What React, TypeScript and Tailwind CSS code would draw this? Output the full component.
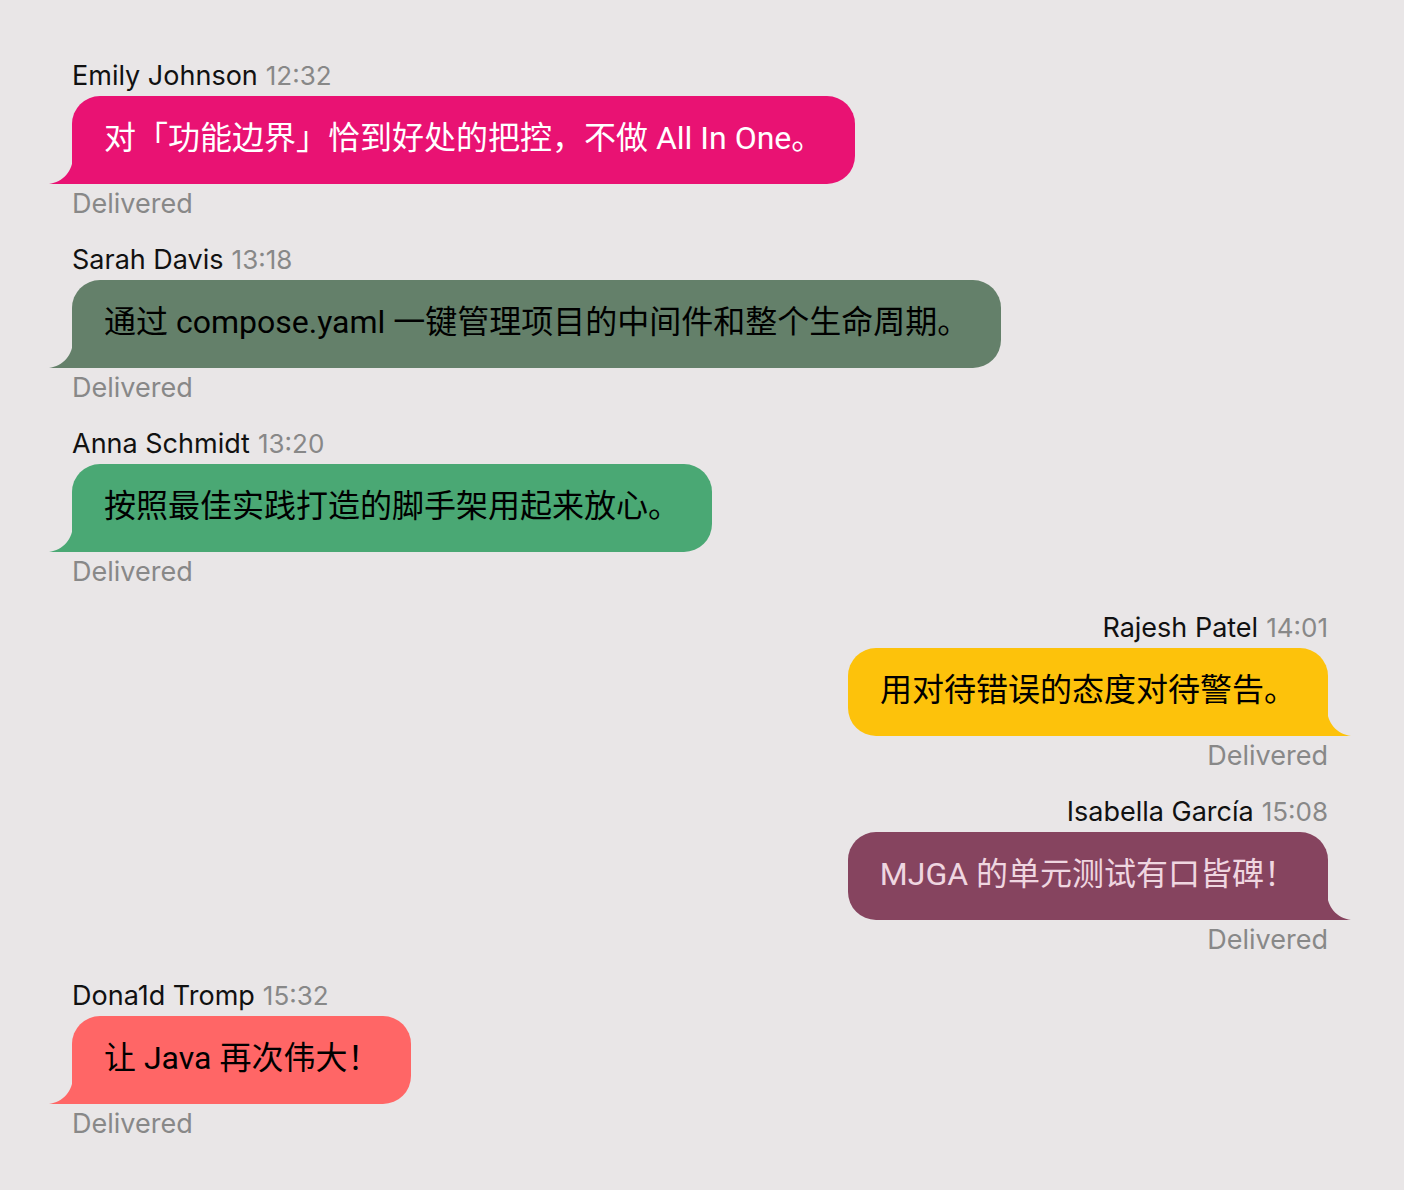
import React from 'react';

type Message = {
  name: string;
  time: string;
  text: string;
  side: 'left' | 'right';
  bubble: string;
  ink: string;
  tail: string;
};

const messages: Message[] = [
  {
    name: 'Emily Johnson',
    time: '12:32',
    text: '对「功能边界」恰到好处的把控，不做 All In One。',
    side: 'left',
    bubble: 'bg-[#e91273]',
    ink: 'text-white',
    tail: 'fill-[#e91273]',
  },
  {
    name: 'Sarah Davis',
    time: '13:18',
    text: '通过 compose.yaml 一键管理项目的中间件和整个生命周期。',
    side: 'left',
    bubble: 'bg-[#64806a]',
    ink: 'text-black',
    tail: 'fill-[#64806a]',
  },
  {
    name: 'Anna Schmidt',
    time: '13:20',
    text: '按照最佳实践打造的脚手架用起来放心。',
    side: 'left',
    bubble: 'bg-[#4aa874]',
    ink: 'text-black',
    tail: 'fill-[#4aa874]',
  },
  {
    name: 'Rajesh Patel',
    time: '14:01',
    text: '用对待错误的态度对待警告。',
    side: 'right',
    bubble: 'bg-[#fdc20b]',
    ink: 'text-black',
    tail: 'fill-[#fdc20b]',
  },
  {
    name: 'Isabella García',
    time: '15:08',
    text: 'MJGA 的单元测试有口皆碑！',
    side: 'right',
    bubble: 'bg-[#86445f]',
    ink: 'text-[#efd6e0]',
    tail: 'fill-[#86445f]',
  },
  {
    name: 'Dona1d Tromp',
    time: '15:32',
    text: '让 Java 再次伟大！',
    side: 'left',
    bubble: 'bg-[#ff6666]',
    ink: 'text-black',
    tail: 'fill-[#ff6666]',
  },
];

const font = {
  fontFamily: 'Inter, "Noto Sans CJK SC", sans-serif',
};

const bubbleFont = {
  fontFamily: 'Roboto, "Noto Sans CJK SC", sans-serif',
};

const Bubble = ({ msg }: { msg: Message }): React.ReactElement => {
  const left = msg.side === 'left';
  return (
    <div className={`flex flex-col ${left ? 'items-start' : 'items-end'}`}>
      <div className="flex h-8 items-center gap-2 text-[27px] leading-8 text-[#111]">
        <span>{msg.name}</span>
        <span className="text-[26px] text-[#888]">{msg.time}</span>
      </div>
      <div
        className={`relative mt-1 rounded-[28px] px-8 pb-[22px] pt-[18px] text-[32px] leading-[48px] ${msg.bubble} ${msg.ink} ${
          left ? 'rounded-bl-none' : 'rounded-br-none'
        }`}
        style={bubbleFont}
      >
        {msg.text}
        {/* tail */}
        <svg
          width="24"
          height="28"
          viewBox="0 0 24 28"
          className={`absolute bottom-0 ${msg.tail} ${left ? '-left-[23px]' : '-right-[23px] -scale-x-100'}`}
        >
          <path d="M24 0 C24 15 14 26 0 28 L24 28 Z" />
        </svg>
      </div>
      <div className="mt-1 h-8 text-[27px] leading-8 text-[#888]">Delivered</div>
    </div>
  );
};

export default function App(): React.ReactElement {
  return (
    <div className="min-h-[1190px] bg-[#e9e6e7] pl-[72px] pr-[76px] pt-[60px]" style={font}>
      <div className="flex flex-col gap-6">
        {messages.map((m) => (
          <Bubble key={m.name} msg={m} />
        ))}
      </div>
    </div>
  );
}
